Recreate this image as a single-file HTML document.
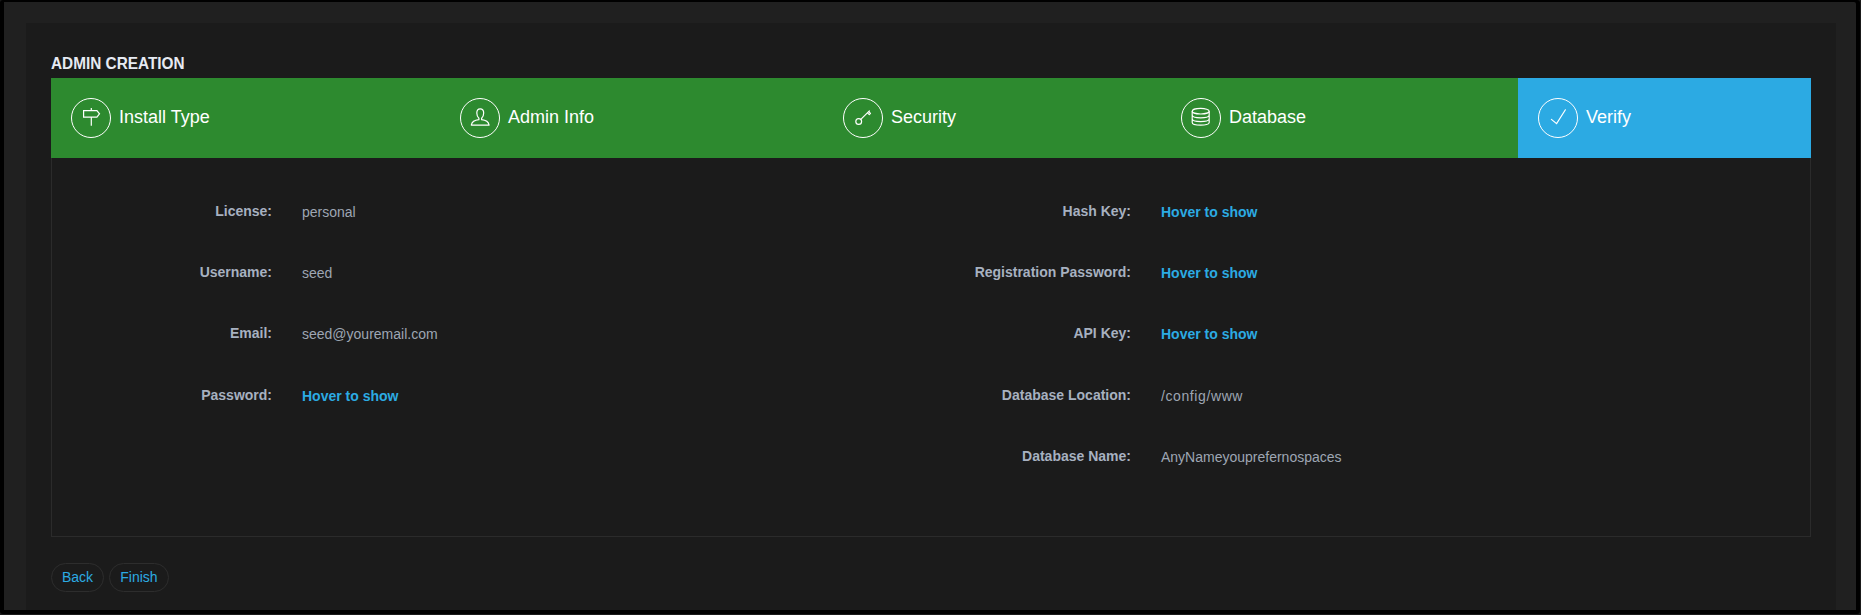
<!DOCTYPE html>
<html>
<head>
<meta charset="utf-8">
<style>
html,body{margin:0;padding:0;}
body{width:1861px;height:615px;background:#1a1a1a;position:relative;overflow:hidden;font-family:"Liberation Sans",sans-serif;}
.outer{position:absolute;left:0;top:0;width:1860px;height:614px;background:#000;border-radius:3px;}
.frame{position:absolute;left:4px;top:2px;width:1852px;height:608px;background:#202020;border-top-right-radius:2px;}
.inner{position:absolute;left:26px;top:23px;width:1810px;height:587px;background:#1b1b1b;}
.title{position:absolute;left:51px;top:53px;font-size:16.5px;font-weight:700;color:#e6eaf2;line-height:20px;white-space:nowrap;transform-origin:0 0;transform:scaleX(0.93);}
.wiz{position:absolute;left:51px;top:78px;width:1760px;height:80px;background:#2d8a2f;}
.step{position:absolute;top:0;height:80px;}
.step .ic{position:absolute;left:20px;top:20px;width:40px;height:40px;}
.step .lb{position:absolute;left:68px;top:27px;font-size:18px;color:#fff;line-height:24px;white-space:nowrap;}
.verify{background:#2caae3;}
.content{position:absolute;left:51px;top:158px;width:1758px;height:378px;border:1px solid #2b2b2b;border-top:none;}
.lab2{position:absolute;right:1589px;font-size:14px;line-height:20px;font-weight:700;color:#a7b1c0;white-space:nowrap;text-align:right;}
.lab2.r{right:730px;}
.val2,.hov2{position:absolute;left:302px;font-size:14px;line-height:20px;color:#9ea6b3;white-space:nowrap;}
.hov2{color:#2cabe3;font-weight:700;}
.val2.r,.hov2.r{left:1161px;}
.btn{position:absolute;top:563px;height:26px;padding-bottom:1px;border:1px solid #2d2d2d;border-radius:15px;color:#2cabe3;font-size:14px;line-height:26px;text-align:center;}
</style>
</head>
<body>
<div class="outer"></div>
<div class="frame"></div>
<div class="inner"></div>
<div class="title">ADMIN CREATION</div>
<div class="wiz">
  <div class="step" style="left:0;width:389px;">
    <svg class="ic" viewBox="0 0 40 40"><circle cx="20" cy="20" r="19.5" fill="none" stroke="#fff" stroke-width="1"/><g fill="none" stroke="#fff" stroke-width="1.2" stroke-linejoin="miter"><path d="M12.6 12.6H25.9L28.5 15.85L25.9 19.1H12.6Z"/><path d="M20.3 10V12.6M20.3 19.1V27.8"/></g></svg>
    <div class="lb">Install Type</div>
  </div>
  <div class="step" style="left:389px;width:383px;">
    <svg class="ic" viewBox="0 0 40 40"><circle cx="20" cy="20" r="19.5" fill="none" stroke="#fff" stroke-width="1"/><g fill="none" stroke="#fff" stroke-width="1.2" stroke-linejoin="round"><path d="M18.9 20.2C17.6 19 16.8 17.2 16.8 15C16.8 12.4 18.1 10.8 20.2 10.8C22.4 10.8 23.7 12.4 23.7 15C23.7 17.2 22.9 19 21.6 20.2V21.7C25.6 22.1 28.6 24.4 29.1 27.1H11.3C11.8 24.4 14.8 22.1 18.9 21.7Z"/></g></svg>
    <div class="lb">Admin Info</div>
  </div>
  <div class="step" style="left:772px;width:338px;">
    <svg class="ic" viewBox="0 0 40 40"><circle cx="20" cy="20" r="19.5" fill="none" stroke="#fff" stroke-width="1"/><g fill="none" stroke="#fff" stroke-width="1.2" stroke-linecap="round"><circle cx="15.7" cy="23.5" r="2.9"/><path d="M17.8 21.4L26.4 12.8"/><path d="M24.5 14.9L26.3 16.6L27.5 15.4L25.8 13.7" stroke-linecap="butt" stroke-linejoin="round"/></g></svg>
    <div class="lb">Security</div>
  </div>
  <div class="step" style="left:1110px;width:357px;">
    <svg class="ic" viewBox="0 0 40 40"><circle cx="20" cy="20" r="19.5" fill="none" stroke="#fff" stroke-width="1"/><g fill="none" stroke="#fff" stroke-width="1.2"><ellipse cx="19.7" cy="13.2" rx="8.5" ry="2.8"/><path d="M11.2 13.2V24.5C11.2 26 15 27.1 19.7 27.1C24.4 27.1 28.2 26 28.2 24.5V13.2M11.2 17.1C11.2 18.8 15 19.9 19.7 19.9C24.4 19.9 28.2 18.8 28.2 17.1M11.2 20.8C11.2 22.5 15 23.6 19.7 23.6C24.4 23.6 28.2 22.5 28.2 20.8"/></g></svg>
    <div class="lb">Database</div>
  </div>
  <div class="step verify" style="left:1467px;width:293px;">
    <svg class="ic" viewBox="0 0 40 40"><circle cx="20" cy="20" r="19.5" fill="none" stroke="#fff" stroke-width="1"/><g fill="none" stroke="#fff" stroke-width="1.2" stroke-linecap="round" stroke-linejoin="miter"><path d="M13.4 21.4L18.6 25.6L27.4 11.8"/></g></svg>
    <div class="lb">Verify</div>
  </div>
</div>
<div class="content"></div>
<div class="lab2" style="top:201px;">License:</div>
<div class="lab2" style="top:262px;">Username:</div>
<div class="lab2" style="top:323px;">Email:</div>
<div class="lab2" style="top:385px;">Password:</div>
<div class="val2" style="top:202px;">personal</div>
<div class="val2" style="top:263px;">seed</div>
<div class="val2" style="top:324px;">seed@youremail.com</div>
<div class="hov2" style="top:386px;">Hover to show</div>
<div class="lab2 r" style="top:201px;">Hash Key:</div>
<div class="lab2 r" style="top:262px;">Registration Password:</div>
<div class="lab2 r" style="top:323px;">API Key:</div>
<div class="lab2 r" style="top:385px;">Database Location:</div>
<div class="lab2 r" style="top:446px;">Database Name:</div>
<div class="hov2 r" style="top:202px;">Hover to show</div>
<div class="hov2 r" style="top:263px;">Hover to show</div>
<div class="hov2 r" style="top:324px;">Hover to show</div>
<div class="val2 r" style="top:386px;letter-spacing:0.6px;">/config/www</div>
<div class="val2 r" style="top:447px;">AnyNameyouprefernospaces</div>
<div class="btn" style="left:51px;width:51px;">Back</div>
<div class="btn" style="left:109px;width:58px;">Finish</div>
</body>
</html>
